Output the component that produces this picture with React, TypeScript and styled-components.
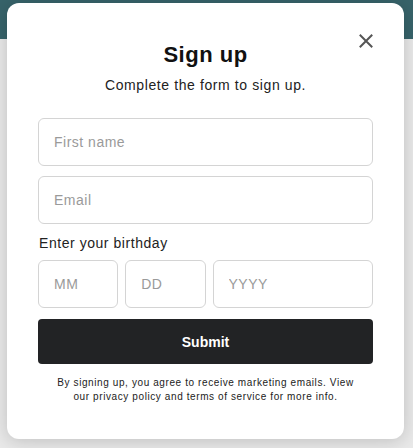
import { createGlobalStyle } from 'styled-components'
import styled from 'styled-components'

const Global = createGlobalStyle`
    html, body {
        margin: 0;
        padding: 0;
    }
    body {
        min-height: 448px;
        font-family: "Liberation Sans", Arial, sans-serif;
        background: linear-gradient(to bottom, #37636a 0, #37636a 39px, #e9e9e9 39px, #e9e9e9 100%);
    }
`

const Page = styled.div`
    padding: 3px 9px 0 7px;
`

const Card = styled.div`
    position: relative;
    box-sizing: border-box;
    width: 397px;
    height: 436px;
    padding: 39px 31px 0;
    background: #fff;
    border-radius: 12px;
    box-shadow: 0 2px 18px rgba(0, 0, 0, 0.18);
`

const Close = styled.button`
    position: absolute;
    top: 28px;
    right: 28px;
    width: 20px;
    height: 20px;
    padding: 0;
    border: 0;
    background: none;
    display: flex;
    align-items: center;
    justify-content: center;
    cursor: pointer;
`

const Title = styled.h1`
    margin: 0;
    font-size: 22px;
    line-height: 26px;
    font-weight: 700;
    letter-spacing: 0.5px;
    color: #111;
    text-align: center;
`

const Subtitle = styled.p`
    margin: 8px 0 0;
    font-size: 14px;
    line-height: 18px;
    letter-spacing: 0.6px;
    color: #222;
    text-align: center;
`

const Form = styled.form`
    margin-top: 24px;
    display: flex;
    flex-direction: column;
`

const Input = styled.input`
    box-sizing: border-box;
    width: 100%;
    height: 48px;
    padding: 0 15px;
    border: 1px solid #d4d4d4;
    border-radius: 6px;
    font-family: inherit;
    font-size: 14px;
    letter-spacing: 0.5px;
    color: #222;
    outline: none;
    &::placeholder {
        color: #9a9a9a;
    }
`

const Field = styled.div<{ $gap?: number }>`
    margin-top: ${p => p.$gap ?? 0}px;
`

const Label = styled.label`
    display: block;
    margin-top: 10px;
    padding-left: 1px;
    font-size: 14px;
    line-height: 18px;
    letter-spacing: 0.55px;
    color: #222;
`

const DateRow = styled.div`
    margin-top: 8px;
    display: grid;
    grid-template-columns: 1fr 1fr 2fr;
    gap: 7px;
`

const Submit = styled.button`
    margin-top: 11px;
    height: 45px;
    border: 0;
    border-radius: 4px;
    background: #222325;
    color: #fff;
    font-family: inherit;
    font-size: 14px;
    font-weight: 700;
    letter-spacing: 0;
    cursor: pointer;
`

const Note = styled.p`
    margin: 12px 0 0;
    font-size: 10px;
    line-height: 14px;
    letter-spacing: 0.6px;
    color: #222;
    text-align: center;
`

export default function App() {
    return (
        <>
            <Global />
            <Page>
                <Card>
                    <Close aria-label="Close">
                        <svg width="14" height="14" viewBox="0 0 14 14">
                            <path d="M1.5 1.5 L12.5 12.5 M12.5 1.5 L1.5 12.5" stroke="#555" strokeWidth="2" strokeLinecap="square" />
                        </svg>
                    </Close>
                    <Title>Sign up</Title>
                    <Subtitle>Complete the form to sign up.</Subtitle>
                    <Form onSubmit={e => e.preventDefault()}>
                        <Field><Input placeholder="First name" /></Field>
                        <Field $gap={10}><Input placeholder="Email" /></Field>
                        <Label>Enter your birthday</Label>
                        <DateRow>
                            <Input placeholder="MM" />
                            <Input placeholder="DD" />
                            <Input placeholder="YYYY" />
                        </DateRow>
                        <Submit type="submit">Submit</Submit>
                    </Form>
                    <Note>
                        By signing up, you agree to receive marketing emails. View
                        <br />
                        our privacy policy and terms of service for more info.
                    </Note>
                </Card>
            </Page>
        </>
    )
}
